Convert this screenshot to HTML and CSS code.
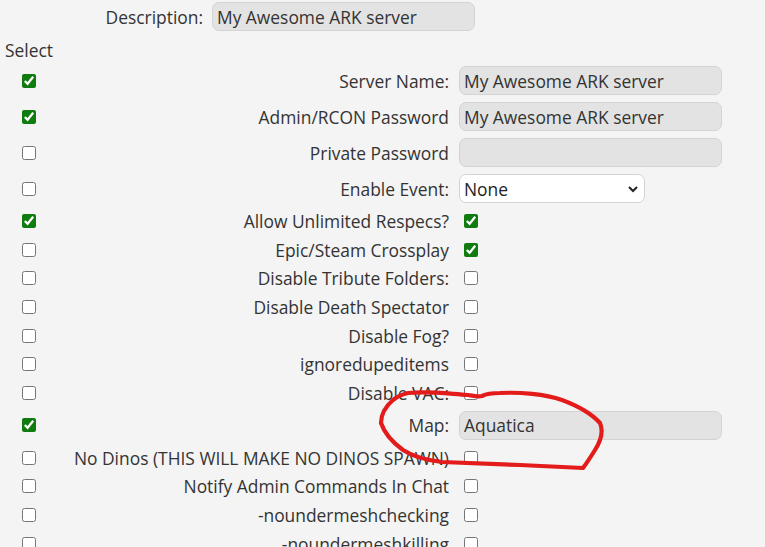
FILE: index.html
```html
<!DOCTYPE html>
<html>
<head>
<meta charset="utf-8">
<link rel="stylesheet" href="styles.css">
</head>
<body>
<div class="page">
  <div class="desc-row">
    <label class="desc-label">Description:</label>
    <input class="text-input" type="text" value="My Awesome ARK server">
  </div>
  <div class="select-head">Select</div>
  <div class="rows">
    <div class="row tall"><span class="cb-cell"><input type="checkbox" checked></span><span class="lbl">Server Name:</span><span class="ctl"><input class="text-input" type="text" value="My Awesome ARK server"></span></div>
    <div class="row tall"><span class="cb-cell"><input type="checkbox" checked></span><span class="lbl">Admin/RCON Password</span><span class="ctl"><input class="text-input" type="text" value="My Awesome ARK server"></span></div>
    <div class="row tall"><span class="cb-cell"><input type="checkbox"></span><span class="lbl">Private Password</span><span class="ctl"><input class="text-input" type="text" value=""></span></div>
    <div class="row tall"><span class="cb-cell"><input type="checkbox"></span><span class="lbl">Enable Event:</span><span class="ctl"><span class="select-wrap"><select class="sel"><option>None</option></select><svg class="chev" width="12" height="8" viewBox="0 0 12 8"><path d="M2 2 L6 6 L10 2" fill="none" stroke="#222" stroke-width="2"/></svg></span></span></div>
    <div class="row"><span class="cb-cell"><input type="checkbox" checked></span><span class="lbl">Allow Unlimited Respecs?</span><span class="ctl"><input class="cb-right" type="checkbox" checked></span></div>
    <div class="row"><span class="cb-cell"><input type="checkbox"></span><span class="lbl">Epic/Steam Crossplay</span><span class="ctl"><input class="cb-right" type="checkbox" checked></span></div>
    <div class="row"><span class="cb-cell"><input type="checkbox"></span><span class="lbl">Disable Tribute Folders:</span><span class="ctl"><input class="cb-right" type="checkbox"></span></div>
    <div class="row"><span class="cb-cell"><input type="checkbox"></span><span class="lbl">Disable Death Spectator</span><span class="ctl"><input class="cb-right" type="checkbox"></span></div>
    <div class="row"><span class="cb-cell"><input type="checkbox"></span><span class="lbl">Disable Fog?</span><span class="ctl"><input class="cb-right" type="checkbox"></span></div>
    <div class="row"><span class="cb-cell"><input type="checkbox"></span><span class="lbl">ignoredupeditems</span><span class="ctl"><input class="cb-right" type="checkbox"></span></div>
    <div class="row"><span class="cb-cell"><input type="checkbox"></span><span class="lbl">Disable VAC:</span><span class="ctl"><input class="cb-right" type="checkbox"></span></div>
    <div class="row tall"><span class="cb-cell"><input type="checkbox" checked></span><span class="lbl">Map:</span><span class="ctl"><input class="text-input" type="text" value="Aquatica"></span></div>
    <div class="row"><span class="cb-cell"><input type="checkbox"></span><span class="lbl">No Dinos (THIS WILL MAKE NO DINOS SPAWN)</span><span class="ctl"><input class="cb-right" type="checkbox"></span></div>
    <div class="row"><span class="cb-cell"><input type="checkbox"></span><span class="lbl">Notify Admin Commands In Chat</span><span class="ctl"><input class="cb-right" type="checkbox"></span></div>
    <div class="row"><span class="cb-cell"><input type="checkbox"></span><span class="lbl">-noundermeshchecking</span><span class="ctl"><input class="cb-right" type="checkbox"></span></div>
    <div class="row"><span class="cb-cell"><input type="checkbox"></span><span class="lbl">-noundermeshkilling</span><span class="ctl"><input class="cb-right" type="checkbox"></span></div>
  </div>
</div>
<svg class="scribble" width="765" height="547" viewBox="0 0 765 547">
  <path d="M408 393 C 430 391, 450 394, 468 395 C 474 396, 478 397, 482 396 C 486 394, 492 393, 500 393 C 520 392, 545 394, 562 400 C 578 406, 592 414, 600 423 C 604 432, 600 442, 595 450 C 590 458, 586 464, 583 468 C 565 467, 545 466, 520 465 C 495 464, 470 463, 442 462 C 425 460, 412 456, 403 450 C 392 442, 384 432, 381 423 C 381 414, 386 406, 393 400 C 398 396, 403 394, 408 393 Z" fill="none" stroke="#e31b1b" stroke-width="4.2" stroke-linejoin="round" stroke-linecap="round"/>
</svg>
</body>
</html>
```

FILE: styles.css
```css
html {
  overflow: hidden;
  background: #f4f4f4;
}
body {
  margin: 0;
  background: #f4f4f4;
  font-family: "Open Sans", "Noto Sans", sans-serif;
  font-size: 17.4px;
  color: #333333;
}
.page {
  padding-top: 2px;
}
.desc-row {
  display: flex;
  align-items: center;
  height: 29px;
}
.desc-label {
  width: 203px;
  text-align: right;
  margin-right: 9px;
}
.text-input {
  box-sizing: border-box;
  width: 263px;
  height: 29px;
  margin: 0;
  padding: 0 4px;
  border: 1px solid #d3d3d3;
  border-radius: 7px;
  background: #e3e3e3;
  font-family: inherit;
  font-size: 17.4px;
  color: #333333;
  outline: none;
}
.select-head {
  margin-top: 8px;
  height: 23.5px;
  line-height: 23.5px;
  padding-left: 5px;
}
.rows {
  display: flex;
  flex-direction: column;
}
.row {
  display: grid;
  grid-template-columns: 58px 391px 316px;
  align-items: center;
  height: 28.7px;
}
.row.tall {
  height: 36px;
}
.cb-cell {
  display: flex;
  justify-content: center;
}
.lbl {
  text-align: right;
  white-space: nowrap;
  line-height: 22px;
}
.ctl {
  display: flex;
  align-items: center;
  padding-left: 10px;
}
input[type="checkbox"] {
  width: 14px;
  height: 14px;
  margin: 0;
  accent-color: #107c10;
}
.cb-right {
  margin-left: 5px !important;
}
.select-wrap {
  position: relative;
  display: inline-flex;
}
.sel {
  appearance: none;
  -webkit-appearance: none;
  box-sizing: border-box;
  width: 186px;
  height: 29px;
  margin: 0;
  padding: 0 4px;
  border: 1px solid #d3d3d3;
  border-radius: 7px;
  background: #ffffff;
  font-family: inherit;
  font-size: 17.4px;
  color: #222222;
}
.chev {
  position: absolute;
  right: 6px;
  top: 11px;
  pointer-events: none;
}
.scribble {
  position: absolute;
  left: 0;
  top: 0;
  pointer-events: none;
}
```
